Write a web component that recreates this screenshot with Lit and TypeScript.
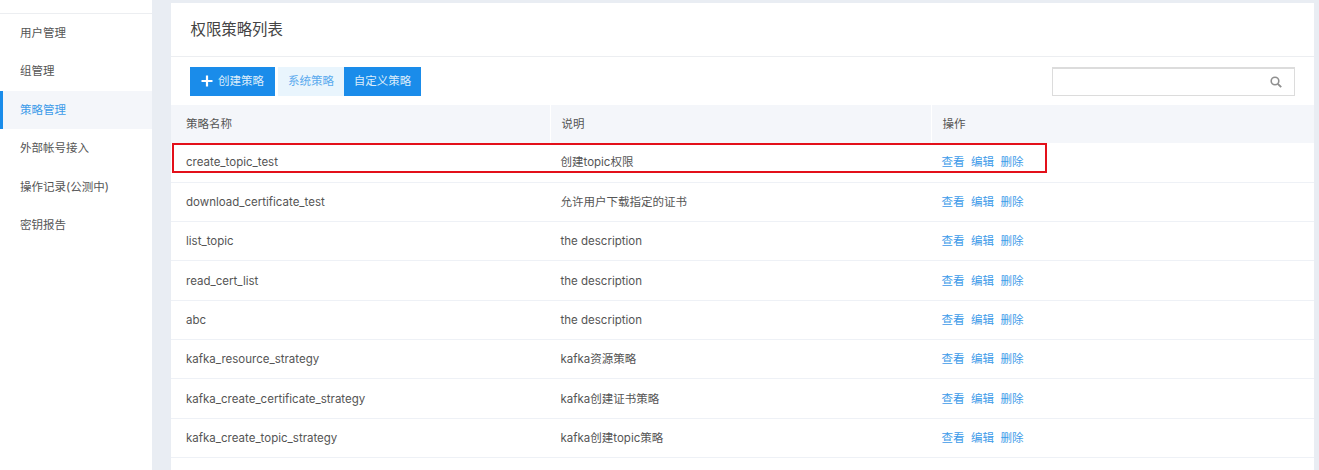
import { css, html, LitElement, TemplateResult } from "lit";
import { customElement } from "lit/decorators.js";

const NAV = ["用户管理", "组管理", "策略管理", "外部帐号接入", "操作记录(公测中)", "密钥报告"];
const ACTIVE_NAV = 2;

const ROWS: [string, string][] = [
    ["create_topic_test", "创建topic权限"],
    ["download_certificate_test", "允许用户下载指定的证书"],
    ["list_topic", "the description"],
    ["read_cert_list", "the description"],
    ["abc", "the description"],
    ["kafka_resource_strategy", "kafka资源策略"],
    ["kafka_create_certificate_strategy", "kafka创建证书策略"],
    ["kafka_create_topic_strategy", "kafka创建topic策略"],
];

@customElement("app-root")
export class AppRoot extends LitElement {
    protected render(): TemplateResult {
        return html`
            <aside class="sidebar">
                <nav class="nav">
                    ${NAV.map(
                        (label, i) =>
                            html`<a class="nav-item ${i === ACTIVE_NAV ? "active" : ""}">${label}</a>`
                    )}
                </nav>
            </aside>
            <main class="main">
                <section class="card">
                    <h1 class="title">权限策略列表</h1>
                    <div class="toolbar">
                        <button class="btn primary create">
                            <svg class="plus" viewBox="0 0 12 12" width="12" height="12">
                                <path d="M6 .5v11M.5 6h11" stroke="#fff" stroke-width="2.2" fill="none" />
                            </svg>
                            创建策略
                        </button>
                        <div class="tabs">
                            <button class="btn light">系统策略</button>
                            <button class="btn primary">自定义策略</button>
                        </div>
                        <div class="search">
                            <svg viewBox="0 0 12 12" width="12" height="12">
                                <circle cx="5" cy="5" r="3.8" stroke="#8f8f8f" stroke-width="1.6" fill="none" />
                                <path d="M7.8 7.8L11.2 11.2" stroke="#8f8f8f" stroke-width="1.9" fill="none" />
                            </svg>
                        </div>
                    </div>
                    <div class="table">
                        <div class="thead">
                            <div class="cell">策略名称</div>
                            <div class="cell">说明</div>
                            <div class="cell">操作</div>
                        </div>
                        ${ROWS.map(
                            ([name, desc]) => html`
                                <div class="row">
                                    <div class="cell">${name}</div>
                                    <div class="cell">${desc}</div>
                                    <div class="cell links"><a>查看</a><a>编辑</a><a>删除</a></div>
                                </div>
                            `
                        )}
                        <div class="highlight"></div>
                    </div>
                </section>
            </main>
        `;
    }

    static styles = css`
        :host {
            display: flex;
            width: 1319px;
            height: 470px;
            overflow: hidden;
            background: #e9edf3;
            color: #555;
            font-family: "Inter", "Noto Sans CJK SC", sans-serif;
            font-size: 11.5px;
            line-height: 16px;
        }
        .sidebar {
            flex: none;
            width: 152px;
            background: #fff;
            padding-top: 12.5px;
        }
        .nav {
            border-top: 1px solid #eceef1;
        }
        .nav-item {
            display: flex;
            align-items: center;
            height: 38.5px;
            padding-left: 20px;
            box-sizing: border-box;
        }
        .nav-item.active {
            color: #3d9be9;
            background: #f4f6fa;
            border-left: 3px solid #1a8cea;
            padding-left: 17px;
        }
        .main {
            flex: 1;
            padding: 3px 5px 0 19px;
            min-width: 0;
        }
        .card {
            background: #fff;
            height: 100%;
        }
        .title {
            margin: 0;
            height: 54px;
            box-sizing: border-box;
            padding-left: 19.5px;
            display: flex;
            align-items: center;
            font-size: 15.4px;
            font-weight: 400;
            color: #444;
            border-bottom: 1px solid #eceef1;
        }
        .toolbar {
            display: flex;
            align-items: center;
            height: 48px;
            padding: 0 19px;
            gap: 3px;
        }
        .btn {
            height: 29px;
            border: 0;
            padding: 0;
            font: inherit;
            display: flex;
            align-items: center;
            justify-content: center;
        }
        .btn.primary {
            background: #1a8cea;
            color: #dcedfb;
        }
        .btn.light {
            background: #e9f5fd;
            color: #5aaaee;
            width: 66px;
        }
        .create {
            width: 85px;
            gap: 5px;
        }
        .tabs {
            display: flex;
        }
        .tabs .primary {
            width: 77px;
        }
        .search {
            margin-left: auto;
            width: 243px;
            height: 29px;
            box-sizing: border-box;
            border: 1px solid #dcdcdc;
            border-top-width: 2px;
            display: flex;
            align-items: center;
            justify-content: flex-end;
            padding-right: 12px;
        }
        .table {
            position: relative;
        }
        .thead,
        .row {
            display: grid;
            grid-template-columns: 379px 381px 1fr;
            align-items: center;
        }
        .thead {
            height: 38.3px;
            background: #f4f6fa;
            color: #555;
        }
        .thead .cell {
            height: 100%;
            display: flex;
            align-items: center;
        }
        .thead .cell + .cell {
            border-left: 1px solid #fff;
        }
        .row {
            height: 39.35px;
            box-sizing: border-box;
            border-bottom: 1px solid #eef1f6;
        }
        .cell {
            padding-left: 15px;
            min-width: 0;
        }
        .cell + .cell {
            padding-left: 10.5px;
        }
        .links {
            display: flex;
            gap: 6.5px;
            color: #3d9be9;
        }
        .highlight {
            position: absolute;
            left: 1px;
            top: 38px;
            width: 875px;
            height: 29.5px;
            box-sizing: border-box;
            border: 2px solid #e3101a;
        }
    `;
}
